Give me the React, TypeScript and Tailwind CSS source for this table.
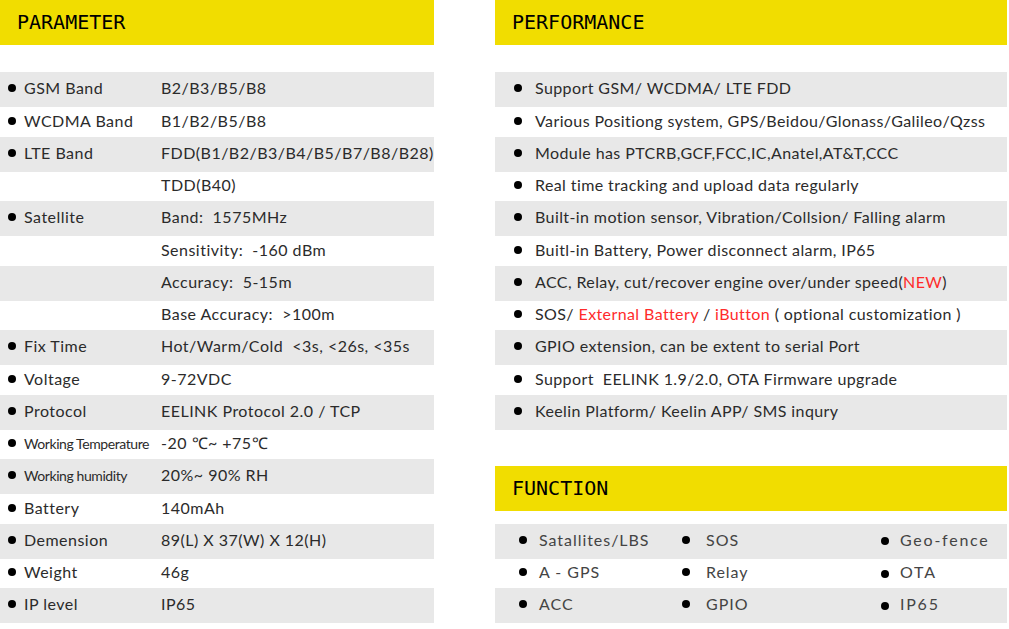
import React from "react";

const body = "font-['Lato',sans-serif]";
const head = "font-['DejaVu_Sans_Mono',monospace]";

type P = { label?: string; value: React.ReactNode; small?: boolean };

const params: P[] = [
  { label: "GSM Band", value: "B2/B3/B5/B8" },
  { label: "WCDMA Band", value: "B1/B2/B5/B8" },
  { label: "LTE Band", value: "FDD(B1/B2/B3/B4/B5/B7/B8/B28)" },
  { value: "TDD(B40)" },
  { label: "Satellite", value: "Band:  1575MHz" },
  { value: "Sensitivity:  -160 dBm" },
  { value: "Accuracy:  5-15m" },
  { value: "Base Accuracy:  >100m" },
  { label: "Fix Time", value: "Hot/Warm/Cold  <3s, <26s, <35s" },
  { label: "Voltage", value: "9-72VDC" },
  { label: "Protocol", value: "EELINK Protocol 2.0 / TCP" },
  { label: "Working Temperature", value: "-20 ℃~ +75℃", small: true },
  { label: "Working humidity", value: "20%~ 90% RH", small: true },
  { label: "Battery", value: "140mAh" },
  { label: "Demension", value: "89(L) X 37(W) X 12(H)" },
  { label: "Weight", value: "46g" },
  { label: "IP level", value: "IP65" },
];

const red = "text-[#ff2b2b]";
const perf: React.ReactNode[] = [
  "Support GSM/ WCDMA/ LTE FDD",
  "Various Positiong system, GPS/Beidou/Glonass/Galileo/Qzss",
  "Module has PTCRB,GCF,FCC,IC,Anatel,AT&T,CCC",
  "Real time tracking and upload data regularly",
  "Built-in motion sensor, Vibration/Collsion/ Falling alarm",
  "Buitl-in Battery, Power disconnect alarm, IP65",
  <>ACC, Relay, cut/recover engine over/under speed(<span className={red}>NEW</span>)</>,
  <>SOS/ <span className={red}>External Battery</span> / <span className={red}>iButton</span> ( optional customization )</>,
  "GPIO extension, can be extent to serial Port",
  "Support  EELINK 1.9/2.0, OTA Firmware upgrade",
  "Keelin Platform/ Keelin APP/ SMS inqury",
];

const funcs = [
  ["Satallites/LBS", "SOS", "Geo-fence"],
  ["A - GPS", "Relay", "OTA"],
  ["ACC", "GPIO", "IP65"],
];

function Dot() {
  return <span className="inline-block w-[8px] h-[8px] rounded-full bg-black shrink-0" />;
}

function Header({ title }: { title: string }) {
  return (
    <div className={`h-[45px] bg-[#f1dd00] flex items-center pl-[17px] pb-[1px] ${head} text-[20px] text-black`}>
      {title}
    </div>
  );
}

function rowCls(i: number) {
  return i % 2 === 0 ? "h-[35px] bg-[#e8e8e8] pb-[3px]" : "h-[29.5px] pb-[2px]";
}

export default function App() {
  return (
    <div className={`w-[1009px] h-[629px] bg-white flex ${body} text-[#2b2b2b]`}>
      <div className="w-[434px] shrink-0 flex flex-col">
        <Header title="PARAMETER" />
        <div className="h-[27px]" />
        {params.map((p, i) => (
          <div key={i} className={`flex items-center ${rowCls(i)}`}>
            <div className="w-[161px] shrink-0 flex items-center pl-[8px] gap-[8px]">
              {p.label && <Dot />}
              {p.label && (
                <span
                  className={
                    p.small
                      ? "text-[14px] tracking-[-0.03em] whitespace-nowrap"
                      : "text-[16px] tracking-[0.03em] whitespace-nowrap"
                  }
                >
                  {p.label}
                </span>
              )}
            </div>
            <div className="text-[16px] tracking-[0.03em] whitespace-pre">{p.value}</div>
          </div>
        ))}
      </div>
      <div className="w-[61px] shrink-0" />
      <div className="w-[512px] shrink-0 flex flex-col">
        <Header title="PERFORMANCE" />
        <div className="h-[27px]" />
        {perf.map((t, i) => (
          <div
            key={i}
            className={`flex items-center pl-[19px] gap-[13px] text-[16px] tracking-[0.025em] whitespace-pre ${rowCls(i)}`}
          >
            <Dot />
            <span>{t}</span>
          </div>
        ))}
        <div className="h-[36px]" />
        <Header title="FUNCTION" />
        <div className="h-[13px]" />
        {funcs.map((r, i) => (
          <div key={i} className={`flex items-center text-[16px] text-[#444] tracking-[0.06em] ${rowCls(i)}`}>
            <div className="w-[185px] flex items-center pl-[24px] gap-[12px]">
              <Dot />
              <span>{r[0]}</span>
            </div>
            <div className="w-[201px] flex items-center pl-[2px] gap-[16px]">
              <Dot />
              <span>{r[1]}</span>
            </div>
            <div className="flex items-center gap-[11px] pt-[3px]">
              <Dot />
              <span className="-mt-[3px] tracking-[0.11em]">{r[2]}</span>
            </div>
          </div>
        ))}
      </div>
    </div>
  );
}
